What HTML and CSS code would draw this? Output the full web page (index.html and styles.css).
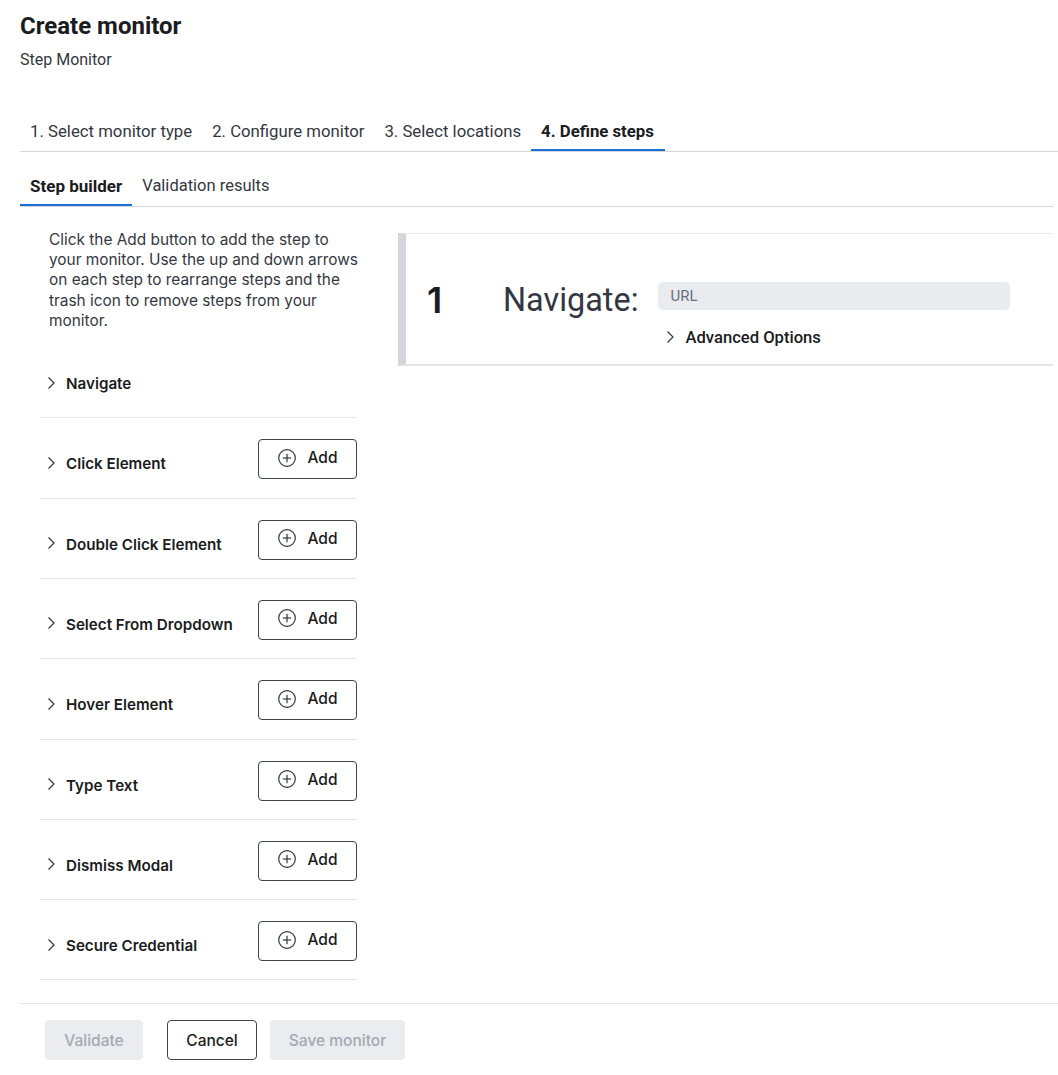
FILE: index.html
```html
<!DOCTYPE html>
<html lang="en">
<head>
<meta charset="utf-8">
<title>Create monitor</title>
<link rel="stylesheet" href="styles.css">
</head>
<body>
<div class="page">
  <h1 class="title">Create monitor</h1>
  <div class="subtitle">Step Monitor</div>

  <div class="tabs">
    <div class="tab">1. Select monitor type</div>
    <div class="tab">2. Configure monitor</div>
    <div class="tab">3. Select locations</div>
    <div class="tab active">4. Define steps</div>
  </div>

  <div class="tabs subtabs">
    <div class="tab active">Step builder</div>
    <div class="tab">Validation results</div>
  </div>

  <div class="main">
    <div class="left">
      <p class="desc">Click the Add button to add the step to your monitor. Use the up and down arrows on each step to rearrange steps and the trash icon to remove steps from your monitor.</p>

      <div class="step">
        <div class="step-title"><svg class="chev" viewBox="0 0 16 16"><polyline points="5.5,2.5 11,8 5.5,13.5"/></svg>Navigate</div>
      </div>
      <div class="step">
        <div class="step-title"><svg class="chev" viewBox="0 0 16 16"><polyline points="5.5,2.5 11,8 5.5,13.5"/></svg>Click Element</div>
        <button class="add"><svg class="plus" viewBox="0 0 20 20"><circle cx="10" cy="10" r="8.3"/><line x1="10" y1="5.8" x2="10" y2="14.2"/><line x1="5.8" y1="10" x2="14.2" y2="10"/></svg>Add</button>
      </div>
      <div class="step">
        <div class="step-title"><svg class="chev" viewBox="0 0 16 16"><polyline points="5.5,2.5 11,8 5.5,13.5"/></svg>Double Click Element</div>
        <button class="add"><svg class="plus" viewBox="0 0 20 20"><circle cx="10" cy="10" r="8.3"/><line x1="10" y1="5.8" x2="10" y2="14.2"/><line x1="5.8" y1="10" x2="14.2" y2="10"/></svg>Add</button>
      </div>
      <div class="step">
        <div class="step-title"><svg class="chev" viewBox="0 0 16 16"><polyline points="5.5,2.5 11,8 5.5,13.5"/></svg>Select From Dropdown</div>
        <button class="add"><svg class="plus" viewBox="0 0 20 20"><circle cx="10" cy="10" r="8.3"/><line x1="10" y1="5.8" x2="10" y2="14.2"/><line x1="5.8" y1="10" x2="14.2" y2="10"/></svg>Add</button>
      </div>
      <div class="step">
        <div class="step-title"><svg class="chev" viewBox="0 0 16 16"><polyline points="5.5,2.5 11,8 5.5,13.5"/></svg>Hover Element</div>
        <button class="add"><svg class="plus" viewBox="0 0 20 20"><circle cx="10" cy="10" r="8.3"/><line x1="10" y1="5.8" x2="10" y2="14.2"/><line x1="5.8" y1="10" x2="14.2" y2="10"/></svg>Add</button>
      </div>
      <div class="step">
        <div class="step-title"><svg class="chev" viewBox="0 0 16 16"><polyline points="5.5,2.5 11,8 5.5,13.5"/></svg>Type Text</div>
        <button class="add"><svg class="plus" viewBox="0 0 20 20"><circle cx="10" cy="10" r="8.3"/><line x1="10" y1="5.8" x2="10" y2="14.2"/><line x1="5.8" y1="10" x2="14.2" y2="10"/></svg>Add</button>
      </div>
      <div class="step">
        <div class="step-title"><svg class="chev" viewBox="0 0 16 16"><polyline points="5.5,2.5 11,8 5.5,13.5"/></svg>Dismiss Modal</div>
        <button class="add"><svg class="plus" viewBox="0 0 20 20"><circle cx="10" cy="10" r="8.3"/><line x1="10" y1="5.8" x2="10" y2="14.2"/><line x1="5.8" y1="10" x2="14.2" y2="10"/></svg>Add</button>
      </div>
      <div class="step">
        <div class="step-title"><svg class="chev" viewBox="0 0 16 16"><polyline points="5.5,2.5 11,8 5.5,13.5"/></svg>Secure Credential</div>
        <button class="add"><svg class="plus" viewBox="0 0 20 20"><circle cx="10" cy="10" r="8.3"/><line x1="10" y1="5.8" x2="10" y2="14.2"/><line x1="5.8" y1="10" x2="14.2" y2="10"/></svg>Add</button>
      </div>
    </div>

    <div class="right">
      <div class="card">
        <div class="num">1</div>
        <div class="label">Navigate:</div>
        <div class="fields">
          <div class="input">URL</div>
          <div class="adv"><svg class="chev" viewBox="0 0 16 16"><polyline points="5.5,2.5 11,8 5.5,13.5"/></svg>Advanced Options</div>
        </div>
      </div>
    </div>
  </div>

  <div class="footer">
    <button class="btn disabled">Validate</button>
    <button class="btn outline">Cancel</button>
    <button class="btn disabled save">Save monitor</button>
  </div>
</div>
</body>
</html>
```

FILE: styles.css
```css
html, body {
  margin: 0;
  padding: 0;
  background: #ffffff;
}
body {
  font-family: Roboto, "Liberation Sans", sans-serif;
  color: #343741;
}
.page {
  padding: 11px 0 0 20px;
}
.title {
  margin: 0;
  font-size: 24px;
  line-height: 30px;
  font-weight: 700;
  color: #1a1c21;
}
.subtitle {
  margin-top: 9px;
  font-size: 16px;
  line-height: 20px;
  color: #343741;
}
.tabs {
  display: flex;
  margin-top: 41px;
  border-bottom: 1px solid #d3d6da;
}
.tab {
  padding: 10px 10px 8px;
  font-size: 16.75px;
  line-height: 20px;
  color: #343741;
  border-bottom: 2px solid transparent;
}
.tab.active {
  font-weight: 700;
  color: #1a1c21;
  border-bottom-color: #1a6fd8;
  padding-right: 11px;
}
.subtabs {
  margin-top: 14px;
  margin-right: 5px;
}
.subtabs .tab {
  font-size: 16.5px;
}
.subtabs .tab.active {
  font-size: 17px;
  padding-right: 10px;
}
.main {
  display: flex;
  align-items: flex-start;
  padding-left: 20px;
}
.left {
  width: 317px;
  flex: none;
}
.desc {
  margin: 23px -5px 7px 9px;
  font-family: Inter, "Noto Sans", sans-serif;
  font-size: 15.4px;
  line-height: 20.2px;
  color: #343741;
}
.step {
  height: 80.3px;
  box-sizing: border-box;
  border-bottom: 1px solid #e4e6ea;
  display: flex;
  justify-content: space-between;
  align-items: flex-start;
}
.step-title {
  display: flex;
  align-items: center;
  margin-top: 36px;
  padding-left: 3px;
  font-family: Inter, "Noto Sans", sans-serif;
  font-size: 15.2px;
  line-height: 20px;
  font-weight: 600;
  color: #1a1c21;
}
.chev {
  width: 16px;
  height: 16px;
  margin-right: 7px;
  margin-top: -3px;
  fill: none;
  stroke: #343741;
  stroke-width: 1.2;
}
.add {
  margin-top: 21px;
  width: 99px;
  height: 40px;
  box-sizing: border-box;
  display: flex;
  align-items: center;
  justify-content: center;
  gap: 10px;
  padding: 0 0 3px 0;
  background: #fff;
  border: 1px solid #3f434b;
  border-radius: 4px;
  font-family: Inter, "Noto Sans", sans-serif;
  font-size: 15.5px;
  font-weight: 500;
  color: #1a1c21;
}
.plus {
  width: 20px;
  height: 20px;
  fill: none;
  stroke: #343741;
  stroke-width: 1.2;
}
.right {
  flex: 1;
  margin: 26px 5px 0 41px;
}
.card {
  display: flex;
  align-items: flex-start;
  border-left: 8px solid #d3d7db;
  border-top: 1px solid #e8eaed;
  border-bottom: 2px solid #e3e5e8;
  padding: 48px 0 16px 21px;
}
.num {
  width: 76px;
  font-family: Inter, "Noto Sans", sans-serif;
  font-size: 36px;
  line-height: 36px;
  font-weight: 600;
  color: #1a1c21;
}
.label {
  font-size: 32.4px;
  line-height: 36px;
  font-weight: 400;
  color: #343741;
  margin-right: 20px;
}
.fields {
  width: 352px;
}
.input {
  height: 28px;
  box-sizing: border-box;
  padding: 4px 12px;
  background: #e9ebee;
  border-radius: 5px;
  font-size: 15px;
  line-height: 20px;
  color: #69707d;
}
.adv {
  display: flex;
  align-items: center;
  margin-top: 18px;
  padding-left: 4px;
  font-size: 16.6px;
  line-height: 20px;
  font-weight: 500;
  color: #1a1c21;
}
.adv .chev {
  margin-right: 7px;
}
.footer {
  display: flex;
  margin-top: 23px;
  border-top: 1px solid #e4e6ea;
  padding: 16px 0 0 25px;
}
.btn {
  height: 40px;
  box-sizing: border-box;
  border-radius: 4px;
  font-family: Inter, "Noto Sans", sans-serif;
  font-size: 15.5px;
  font-weight: 500;
  border: 1px solid transparent;
  background: #fff;
  color: #1a1c21;
}
.btn.disabled {
  background: #eaecef;
  color: #a2a9b3;
  width: 98px;
}
.btn.outline {
  width: 90px;
  border-color: #3f434b;
  margin-left: 24px;
}
.btn.save {
  width: 135px;
  margin-left: 13px;
}
```
